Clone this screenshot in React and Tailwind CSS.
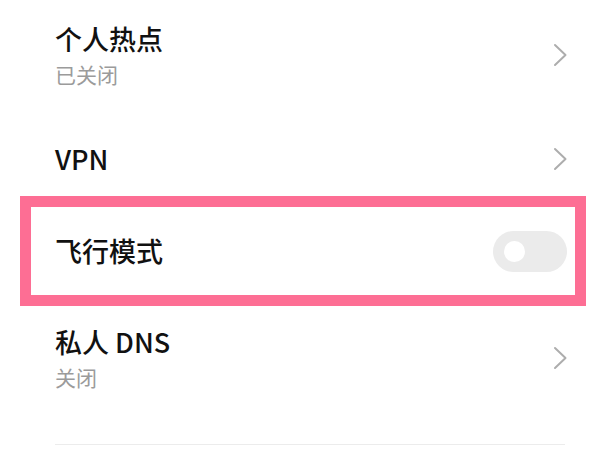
function Chevron() {
  return (
    <svg width="14" height="24" viewBox="0 0 14 24" fill="none" stroke="#adadad" strokeWidth={2} strokeLinecap="round" strokeLinejoin="round">
      <polyline points="2,2 12.5,12 2,22" />
    </svg>
  );
}

const font = { fontFamily: '"Noto Sans CJK SC", "Noto Sans", sans-serif' };

function Row({ title, sub, className }) {
  return (
    <div className={`flex items-center justify-between pl-[55px] pr-[33px] ${className}`}>
      <div className="flex flex-col">
        <span className="text-[27px] leading-[32px] font-medium text-[#111]">{title}</span>
        {sub && <span className="text-[21px] leading-[26px] mt-[6px] text-[#9b9b9b]">{sub}</span>}
      </div>
      <Chevron />
    </div>
  );
}

export default function App() {
  return (
    <div className="w-[600px] h-[450px] bg-white overflow-hidden flex flex-col" style={font}>
      <Row title="个人热点" sub="已关闭" className="h-[112px] pb-[2px]" />
      <Row title="VPN" className="h-[84px] pt-[10px]" />

      {/* highlighted row */}
      <div className="ml-[20px] mr-[14px] h-[110px] border-[11px] border-[#fd6e94] flex items-center justify-between pl-[24px] pr-[8px]">
        <span className="text-[27px] leading-[32px] font-medium text-[#111]">飞行模式</span>
        <div className="w-[74px] h-[41px] rounded-full bg-[#ebebeb] flex items-center">
          <div className="w-[21px] h-[21px] rounded-full bg-white ml-[11px]" />
        </div>
      </div>

      <Row title="私人 DNS" sub="关闭" className="h-[100px] pt-[4px]" />
      <div className="mt-[38px] ml-[55px] mr-[35px] h-px bg-[#ececec]" />
    </div>
  );
}
